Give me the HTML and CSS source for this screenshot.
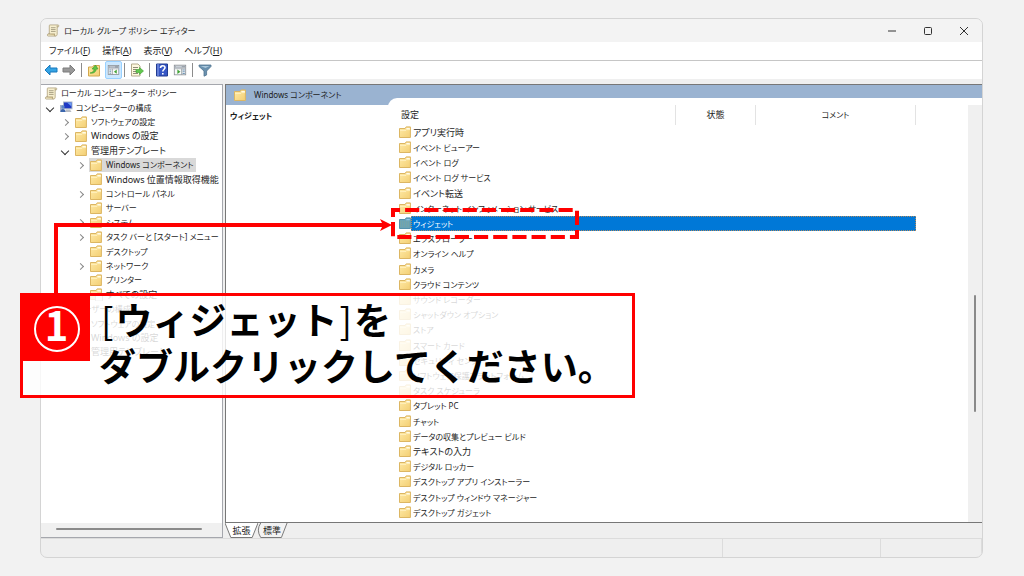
FILE: index.html
```html
<!DOCTYPE html>
<html lang="ja">
<head>
<meta charset="utf-8">
<title>ローカル グループ ポリシー エディター</title>
<link rel="stylesheet" href="styles.css">
</head>
<body>
<svg class="defs" width="0" height="0" aria-hidden="true">
  <defs>
    <linearGradient id="gold" x1="0" y1="0" x2="1" y2="1"><stop offset="0" stop-color="#ffeaa6"/><stop offset="1" stop-color="#f3cf74"/></linearGradient>
    <symbol id="folder" viewBox="0 0 14 13"><path d="M1.500 2.500h5.600l1-1.600h4.300v10.600H1.500z" fill="url(#gold)" stroke="#dcb663"/><path d="M8.600 2h3.200v1.300H8z" fill="#fffbe8"/><path d="M2 4.400h6l.8-.8H12" stroke="#fff0bd" fill="none"/></symbol>
    <symbol id="folder-on" viewBox="0 0 14 13"><path d="M1.500 2.500h5.600l1-1.600h4.300v10.600H1.500z" fill="#6aa3b5" stroke="#5592ac"/><path d="M8.600 2h3.200v1.300H8z" fill="#8fc5ea"/><path d="M2 5h10M2 7h10M2 9h10" stroke="#80a69c" stroke-dasharray="1 1"/></symbol>
    <symbol id="scroll" viewBox="0 0 14 14"><path d="M3.500 1h9c1 0 1 2 0 2.300h-1V11c0 1.500-1 2-2 2H2c-1.500 0-1.500-2.300 0-2.300h1V2c0-.6.2-1 .5-1z" fill="#f7efcf" stroke="#a89a74" stroke-width=".8"/><path d="M4.800 4h5M4.800 6h5M4.800 8h5" stroke="#8f886f" stroke-width=".8"/><path d="M2 10.700h7c-.8.700-.6 2.300.6 2.300" fill="#dfcf9e" stroke="#998860" stroke-width=".7"/><path d="M11.500 3.300V1.600" stroke="#a89a74"/></symbol>
    <symbol id="computer" viewBox="0 0 14 13"><rect x="4.500" y="1" width="8.500" height="6.800" fill="#1f39c4" stroke="#a7b4c8"/><path d="M8 1.500h4.500v4z" fill="#6f9cf0"/><path d="M7 8.500h4l1.500 2.500H6z" fill="#b8bcc4"/><path d="M1 4h3v7H1z" fill="#a4b1ca"/><circle cx="4" cy="6" r="1.700" fill="#5c86c8"/><path d="M1.500 11c0-4 5-4 5 0z" fill="#3b66ad"/></symbol>
    <symbol id="panel" viewBox="0 0 16 14"><rect x="1.500" y="1.500" width="13" height="11" fill="#fafafa" stroke="#8c9298"/><path d="M2 2h12v2.500H2z" fill="#9aa3ad"/><path d="M3 3.200h7" stroke="#dde2e8"/><path d="M2 5.500h12" stroke="#a7adb5"/></symbol>
  </defs>
</svg>

<main class="window">
  <header class="titlebar">
    <svg class="ico"><use href="#scroll"/></svg>
    <h1>ローカル グループ ポリシー エディター</h1>
    <div class="controls">
      <button aria-label="最小化"><svg viewBox="0 0 10 10"><path d="M1 5h8"/></svg></button>
      <button aria-label="最大化"><svg viewBox="0 0 10 10"><rect x="1.500" y="1.500" width="7" height="7" rx="1"/></svg></button>
      <button aria-label="閉じる"><svg viewBox="0 0 10 10"><path d="M1 1l8 8M9 1L1 9"/></svg></button>
    </div>
  </header>

  <nav class="menubar">
    <button>ファイル(<u>F</u>)</button>
    <button>操作(<u>A</u>)</button>
    <button>表示(<u>V</u>)</button>
    <button>ヘルプ(<u>H</u>)</button>
  </nav>

  <div class="toolbar" role="toolbar">
    <button aria-label="戻る"><svg viewBox="0 0 14 14"><path d="M1 7l5-5v3h7v4H6v3z" fill="#35a4e4" stroke="#1979bd"/></svg></button>
    <button aria-label="進む"><svg viewBox="0 0 14 14"><path d="M13 7L8 2v3H1v4h7v3z" fill="#999" stroke="#7c7c7c"/></svg></button>
    <span class="sep"></span>
    <button aria-label="上へ"><svg viewBox="0 0 14 14"><path d="M1.500 4h4l1-1.500h6V13h-11z" fill="url(#gold)" stroke="#d3a84e"/><path d="M3 10c3-.5 4-2 4-4H5l3.500-4L11 6H9.300C9 9 6.500 10.800 3 10z" fill="#5fc344" stroke="#3a9a2b" stroke-width=".6"/></svg></button>
    <button class="tile" aria-label="コンソール ツリーの表示" aria-pressed="true"><svg viewBox="0 0 16 14"><use href="#panel"/><path d="M6.500 5.500v7" stroke="#8c9298"/><path d="M3 7h2M3 9h2M3 11h2" stroke="#5a87ad"/><path d="M12 6.500v5L8.500 9z" fill="#41a336"/></svg></button>
    <span class="sep snug"></span>
    <button aria-label="エクスポート"><svg viewBox="0 0 14 14"><path d="M1.500 1h6.500l2 2v10H1.500z" fill="#fff9df" stroke="#b4ab8b"/><path d="M3 4.500h5M3 6.500h3M3 8.500h3M3 10.500h5" stroke="#918b78"/><path d="M6 6.500h3.500v-2L13.500 8l-4 3.500v-2H6z" fill="#62c84e" stroke="#389c2e" stroke-width=".6"/></svg></button>
    <span class="sep"></span>
    <button aria-label="ヘルプ"><svg viewBox="0 0 14 14"><path d="M1.500 1h11v12h-11z" fill="#3657c6" stroke="#223c91"/><path d="M3 1v12" stroke="#8fa5ea"/><path d="M5.500 5c0-3 4.500-3 4.500-.4C10 6.500 7.800 6.500 7.800 8.500M7.800 10v1.600" fill="none" stroke="#fff" stroke-width="1.600"/></svg></button>
    <button aria-label="操作ウィンドウの表示"><svg viewBox="0 0 16 14"><use href="#panel"/><path d="M10 5.500v7" stroke="#8c9298"/><path d="M11 7h2.500M11 9h2.500M11 11h2.500" stroke="#5a87ad"/><path d="M5 6.500v5L8.500 9z" fill="#41a336"/></svg></button>
    <span class="sep"></span>
    <button aria-label="フィルター"><svg viewBox="0 0 14 14"><path d="M1 2h12v1.500L8.600 8v4L6 13.200V8L1 3.500z" fill="#6a91af" stroke="#50758f" stroke-width=".8"/><path d="M2.500 3h9L7.500 5z" fill="#abc8dc"/></svg></button>
  </div>

  <div class="panes">
    <aside class="treepane">
      <ul class="tree" role="tree">
        <li class="lv0"><svg class="ico"><use href="#scroll"/></svg><span>ローカル コンピューター ポリシー</span></li>
        <li class="lv1"><i class="chev open"></i><svg class="ico"><use href="#computer"/></svg><span>コンピューターの構成</span></li>
        <li class="lv2"><i class="chev"></i><svg class="ico"><use href="#folder"/></svg><span>ソフトウェアの設定</span></li>
        <li class="lv2"><i class="chev"></i><svg class="ico"><use href="#folder"/></svg><span class="mixed">Windows の設定</span></li>
        <li class="lv2"><i class="chev open"></i><svg class="ico"><use href="#folder"/></svg><span class="mixed">管理用テンプレート</span></li>
        <li class="lv3"><i class="chev"></i><div class="picked"><svg class="ico"><use href="#folder"/></svg><span>Windows コンポーネント</span></div></li>
        <li class="lv3"><i class="chev none"></i><svg class="ico"><use href="#folder"/></svg><span class="mixed">Windows 位置情報取得機能</span></li>
        <li class="lv3"><i class="chev"></i><svg class="ico"><use href="#folder"/></svg><span>コントロール パネル</span></li>
        <li class="lv3"><i class="chev none"></i><svg class="ico"><use href="#folder"/></svg><span>サーバー</span></li>
        <li class="lv3"><i class="chev"></i><svg class="ico"><use href="#folder"/></svg><span>システム</span></li>
        <li class="lv3"><i class="chev"></i><svg class="ico"><use href="#folder"/></svg><span>タスク バーと [スタート] メニュー</span></li>
        <li class="lv3"><i class="chev none"></i><svg class="ico"><use href="#folder"/></svg><span>デスクトップ</span></li>
        <li class="lv3"><i class="chev"></i><svg class="ico"><use href="#folder"/></svg><span>ネットワーク</span></li>
        <li class="lv3"><i class="chev none"></i><svg class="ico"><use href="#folder"/></svg><span>プリンター</span></li>
        <li class="lv3"><i class="chev none"></i><svg class="ico" viewBox="0 0 14 13"><use href="#folder"/><path d="M6.500 5.500h5l2 2V13h-7z" fill="#fff" stroke="#aaa"/></svg><span class="mixed">すべての設定</span></li>
        <li class="lv1"><i class="chev open"></i><svg class="ico"><use href="#computer"/></svg><span>ユーザーの構成</span></li>
        <li class="lv2"><i class="chev"></i><svg class="ico"><use href="#folder"/></svg><span>ソフトウェアの設定</span></li>
        <li class="lv2"><i class="chev"></i><svg class="ico"><use href="#folder"/></svg><span class="mixed">Windows の設定</span></li>
        <li class="lv2"><i class="chev"></i><svg class="ico"><use href="#folder"/></svg><span class="mixed">管理用テンプレート</span></li>
      </ul>
      <div class="hscroll"><span></span></div>
    </aside>

    <div class="right">
      <section class="detail">
        <div class="band"><svg class="ico"><use href="#folder"/></svg><h2>Windows コンポーネント</h2></div>
        <div class="split">
          <h3>ウィジェット</h3>
          <div class="listarea">
            <table>
              <thead><tr><th class="c-name">設定</th><th class="c-state">状態</th><th class="c-note">コメント</th></tr></thead>
              <tbody>
                <tr><td colspan="3"><svg class="ico"><use href="#folder"/></svg><span class="mixed">アプリ実行時</span></td></tr>
                <tr><td colspan="3"><svg class="ico"><use href="#folder"/></svg><span>イベント ビューアー</span></td></tr>
                <tr><td colspan="3"><svg class="ico"><use href="#folder"/></svg><span>イベント ログ</span></td></tr>
                <tr><td colspan="3"><svg class="ico"><use href="#folder"/></svg><span>イベント ログ サービス</span></td></tr>
                <tr><td colspan="3"><svg class="ico"><use href="#folder"/></svg><span class="mixed">イベント転送</span></td></tr>
                <tr><td colspan="3"><svg class="ico"><use href="#folder"/></svg><span>インターネット インフォメーション サービス</span></td></tr>
                <tr class="selected"><td colspan="3"><svg class="ico"><use href="#folder-on"/></svg><span>ウィジェット</span></td></tr>
                <tr><td colspan="3"><svg class="ico"><use href="#folder"/></svg><span>エクスプローラー</span></td></tr>
                <tr><td colspan="3"><svg class="ico"><use href="#folder"/></svg><span>オンライン ヘルプ</span></td></tr>
                <tr><td colspan="3"><svg class="ico"><use href="#folder"/></svg><span>カメラ</span></td></tr>
                <tr><td colspan="3"><svg class="ico"><use href="#folder"/></svg><span>クラウド コンテンツ</span></td></tr>
                <tr><td colspan="3"><svg class="ico"><use href="#folder"/></svg><span>サウンド レコーダー</span></td></tr>
                <tr><td colspan="3"><svg class="ico"><use href="#folder"/></svg><span>シャットダウン オプション</span></td></tr>
                <tr><td colspan="3"><svg class="ico"><use href="#folder"/></svg><span>ストア</span></td></tr>
                <tr><td colspan="3"><svg class="ico"><use href="#folder"/></svg><span>スマート カード</span></td></tr>
                <tr><td colspan="3"><svg class="ico"><use href="#folder"/></svg><span>セキュリティ センター</span></td></tr>
                <tr><td colspan="3"><svg class="ico"><use href="#folder"/></svg><span>ソフトウェア保護プラットフォーム</span></td></tr>
                <tr><td colspan="3"><svg class="ico"><use href="#folder"/></svg><span>タスク スケジューラ</span></td></tr>
                <tr><td colspan="3"><svg class="ico"><use href="#folder"/></svg><span>タブレット PC</span></td></tr>
                <tr><td colspan="3"><svg class="ico"><use href="#folder"/></svg><span>チャット</span></td></tr>
                <tr><td colspan="3"><svg class="ico"><use href="#folder"/></svg><span>データの収集とプレビュー ビルド</span></td></tr>
                <tr><td colspan="3"><svg class="ico"><use href="#folder"/></svg><span class="mixed">テキストの入力</span></td></tr>
                <tr><td colspan="3"><svg class="ico"><use href="#folder"/></svg><span>デジタル ロッカー</span></td></tr>
                <tr><td colspan="3"><svg class="ico"><use href="#folder"/></svg><span>デスクトップ アプリ インストーラー</span></td></tr>
                <tr><td colspan="3"><svg class="ico"><use href="#folder"/></svg><span>デスクトップ ウィンドウ マネージャー</span></td></tr>
                <tr><td colspan="3"><svg class="ico"><use href="#folder"/></svg><span>デスクトップ ガジェット</span></td></tr>
              </tbody>
            </table>
            <div class="vscroll"><span></span></div>
          </div>
        </div>
      </section>
      <div class="tabs">
        <button class="tab active"><svg viewBox="0 0 34 15" preserveAspectRatio="none"><path d="M0 0l6 14.500h22L34 0" fill="#fff" stroke="#777"/></svg><span>拡張</span></button>
        <button class="tab"><svg viewBox="0 0 34 15" preserveAspectRatio="none"><path d="M5 0Q0 7 5 14.500H27L33 0" fill="#f3f3f3" stroke="#777"/></svg><span>標準</span></button>
      </div>
    </div>
  </div>

  <footer class="status"><span></span><span></span><span></span></footer>
</main>

<svg class="pointer" viewBox="0 0 600 300" width="600" height="300" aria-hidden="true">
  <path d="M56 298V225H384" fill="none" stroke="#f00" stroke-width="4"/>
  <path d="M392 225l-12-6 3 6-3 6z" fill="#f00"/>
  <rect x="393" y="210" width="184" height="27" fill="none" stroke="#f00" stroke-width="4" pathLength="418" stroke-dasharray="14 5" stroke-dashoffset="7"/>
</svg>
<section class="callout">
  <div class="badge"><span>1</span></div>
  <p><span class="bracket">[</span>ウィジェット<span class="bracket">]</span>を<br>ダブルクリックしてください。</p>
</section>
</body>
</html>
```
FILE: styles.css
```css
* { box-sizing: border-box; }

body {
  margin: 0;
  min-height: 100vh;
  padding: 18px 41px 18px 40px;
  display: flex;
  flex-direction: column;
  position: relative;
  background: #f2f2f2;
  color: #1c1c1c;
  font: 9px/14px "Noto Sans", "Noto Sans CJK JP", sans-serif;
  font-feature-settings: "palt";
}

button {
  margin: 0;
  padding: 0;
  border: 0;
  background: none;
  color: inherit;
  font: inherit;
  font-feature-settings: inherit;
}

h1, h2, h3, p, ul { margin: 0; padding: 0; font-size: inherit; font-weight: normal; }

.defs { position: absolute; }
.ico { width: 14px; height: 13px; flex: none; display: block; }

.window {
  flex: 1;
  display: flex;
  flex-direction: column;
  border: 1px solid #d4d4d4;
  border-radius: 7px;
  background: #efefef;
  overflow: hidden;
}

.titlebar {
  height: 23px;
  padding-left: 5px;
  display: flex;
  align-items: center;
  gap: 4px;
  background: #f3f3f3;
  font-size: 8px;
}
.controls { margin-left: auto; display: flex; }
.controls button { width: 36px; height: 23px; display: grid; place-items: center; }
.controls svg { width: 10px; height: 10px; fill: none; stroke: #333; stroke-width: 1; }

.menubar {
  height: 19px;
  padding-left: 8px;
  display: flex;
  align-items: center;
  gap: 12px;
  background: #fff;
  border-bottom: 1px solid #c6c6c6;
}

.toolbar {
  height: 18px;
  padding-left: 3px;
  display: flex;
  align-items: center;
  gap: 4px;
  background: #fff;
}
.toolbar button { width: 14px; height: 14px; }
.toolbar svg { display: block; width: 100%; height: 14px; }
.toolbar .tile { width: 17px; height: 18px; padding: 0 1px; background: #cce8ff; border: 1px solid #99d1ff; border-radius: 2px; }
.sep { width: 1px; height: 14px; margin: 0 1px; background: #8c8c8c; }
.sep.snug { margin-left: -2px; }

.panes { flex: 1; padding-top: 5px; display: flex; gap: 2px; }

.treepane {
  width: 182px;
  flex: none;
  display: flex;
  flex-direction: column;
  background: #fff;
  border: 1px solid #a5a7ad;
  border-left: 0;
  overflow: hidden;
}
.tree { flex: 1; padding-top: 1px; list-style: none; font-size: 8px; }
.tree li { height: 14px; display: flex; align-items: center; gap: 3px; white-space: nowrap; }
.tree li:nth-child(5n + 2), .tree li:nth-child(5n) { height: 15px; }
.mixed { font-size: 9px; }
.lv0 { padding-left: 3px; }
.lv1 { padding-left: 3px; }
.lv2 { padding-left: 18px; }
.lv3 { padding-left: 33px; }
.chev { width: 12px; height: 12px; flex: none; display: grid; place-items: center; }
.chev::before { content: ""; width: 4px; height: 4px; border: solid #888; border-width: 1px 1px 0 0; transform: rotate(45deg); }
.chev.open::before { width: 5px; height: 5px; border-color: #333; transform: rotate(135deg); }
.chev.none { visibility: hidden; }
.picked { height: 14px; padding-right: 3px; display: flex; align-items: center; gap: 3px; background: #d9d9d9; }
.hscroll { height: 14px; padding: 5px 20px 0 15px; background: #f0f0f0; }
.hscroll span { display: block; height: 2px; border-radius: 1px; background: #8a8a8a; }

.right { flex: 1; display: flex; flex-direction: column; }
.detail {
  flex: 1;
  display: flex;
  flex-direction: column;
  background: #9ab3d1;
  border: 1px solid #777;
  border-right: 0;
}
.band { height: 20px; padding-left: 7px; display: flex; align-items: center; gap: 7px; font-size: 8px; }
.split { flex: 1; display: flex; background: linear-gradient(#fff, #fff) 0 0 / 163px 100% no-repeat; }
.split h3 { width: 162px; padding: 4px 0 0 4px; font-size: 8px; font-weight: bold; }
.listarea {
  flex: 1;
  margin-top: -7px;
  padding-top: 7px;
  display: flex;
  align-items: stretch;
  justify-content: space-between;
  background: #fff;
  border-top-left-radius: 9px;
}
table { width: 528px; align-self: flex-start; border-collapse: collapse; table-layout: fixed; }
th { height: 20px; padding: 0; border-right: 1px solid #e3e3e3; font-weight: normal; }
.c-name { padding-left: 13px; text-align: left; }
.c-state { width: 80px; }
.c-note { width: 160px; font-size: 8px; }
td { height: 15px; padding: 0 0 0 10px; font-size: 8px; line-height: 15px; white-space: nowrap; }
tr:nth-child(5n) td { height: 16px; }
td .ico { float: left; margin-top: 1px; }
td span { display: block; margin-left: 13px; padding-left: 2px; }
.selected span { background: #0078d7; color: #fff; outline: 1px dotted #b08a60; outline-offset: -1px; }
.vscroll { width: 14px; padding: 190px 6px 110px; background: #f0f0f0; }
.vscroll span { display: block; width: 2px; height: 100%; border-radius: 1px; background: #8a8a8a; }

.tabs { height: 15px; display: flex; }
.tab { width: 33px; height: 15px; position: relative; }
.tab + .tab { width: 32px; margin-left: -2px; }
.tab svg { position: absolute; inset: 0; width: 100%; height: 100%; }
.tab span { position: relative; }

.status { height: 19px; display: flex; border-top: 1px solid #dcdcdc; }
.status span { flex: 1; border-right: 1px solid #dcdcdc; }
.status span:nth-child(2) { flex: none; width: 158px; }
.status span:nth-child(3) { flex: none; width: 101px; }

.pointer { position: absolute; left: 0; top: 0; pointer-events: none; }

.callout {
  position: absolute;
  left: 20px;
  top: 293px;
  display: flex;
  width: 615px;
  border: 3px solid #f00;
  background: rgba(255, 255, 255, .82);
}
.badge { width: 67px; height: 65px; flex: none; display: grid; place-items: center; background: #f00; }
.badge span {
  width: 46px;
  height: 46px;
  border: 2px solid #fff;
  border-radius: 50%;
  color: #fff;
  font: bold 40px/32px "Noto Sans CJK JP", sans-serif;
  text-align: center;
}
.callout p {
  padding: 0 0 7px 9px;
  color: #000;
  font: bold 37px/46px "Noto Sans CJK JP", sans-serif;
  font-feature-settings: normal;
  white-space: nowrap;
}
.bracket { padding: 0 2px; font-weight: normal; }
```
